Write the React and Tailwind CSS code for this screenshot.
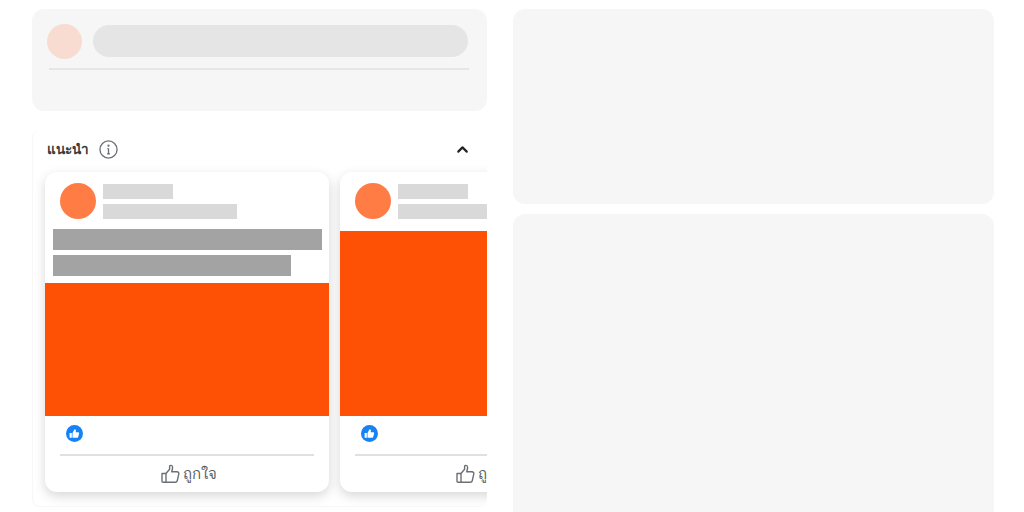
import { ChevronUp } from 'lucide-react';

function LikeBadge() {
  return (
    <svg width="17" height="17" viewBox="0 0 17 17">
      <circle cx="8.5" cy="8.5" r="8.5" fill="#1583f5" />
      <path d="M3.6 8h2.2v4.8H3.6zM6.5 8l2-3.8c1-.1 1.6.7 1.4 1.7l-.3 1.3h2.5c.8 0 1.2.6 1 1.3l-.9 3.4c-.1.5-.5.8-1 .8H6.5z" fill="#fff" />
    </svg>
  );
}

function ThumbOutline() {
  return (
    <svg width="19" height="20" viewBox="0 0 19 20" fill="none" stroke="#6b7075" strokeWidth="1.4" strokeLinejoin="round">
      <path d="M1 9.5h4v8.8H2a1 1 0 0 1-1-1z" />
      <path d="M5 9.5 8.6 5.2V2.4c0-1.4 2.8-1.6 3 .8.1 1.5-.6 3.2-.9 4.6h5.4c1.2 0 2 1 1.7 2.1l-1.5 6.6c-.2 1-1 1.8-2 1.8H5" />
    </svg>
  );
}

function PostCard({ hasTitle }) {
  return (
    <div className="flex h-[320px] w-[284px] shrink-0 flex-col overflow-hidden rounded-xl bg-white shadow-[0_4px_12px_rgba(0,0,0,0.16)]">
      <div className="flex gap-[7px] pl-[15px] pt-[11px]">
        <div className="h-9 w-9 rounded-full bg-[#ff7c45]" />
        <div className="flex flex-col gap-[5px] pt-px">
          <div className="h-[15px] w-[70px] bg-[#d9d9d9]" />
          <div className="h-[15px] w-[134px] bg-[#d9d9d9]" />
        </div>
      </div>
      {hasTitle ? (
        <div className="flex flex-col gap-[5px] px-2 pt-[10px]">
          <div className="h-[21px] w-[269px] bg-[#a3a3a3]" />
          <div className="h-[21px] w-[238px] bg-[#a3a3a3]" />
        </div>
      ) : null}
      <div className={hasTitle ? 'mt-[7px] h-[133px] bg-[#ff5106]' : 'mt-3 h-[185px] bg-[#ff5106]'} />
      <div className="pl-[21px] pt-[9px]">
        <LikeBadge />
      </div>
      <div className="mx-[15px] mt-[12px] h-[2px] bg-[#e0e0e0]" />
      <div className="flex flex-1 items-center justify-center gap-[3px] pb-px pl-[4px] font-['Noto_Sans',sans-serif] text-[15px] text-[#5c6166]">
        <ThumbOutline />
        <span>ถูกใจ</span>
      </div>
    </div>
  );
}

export default function App() {
  return (
    <div className="flex h-[512px] gap-[26px] overflow-hidden bg-white pl-8 pt-[9px]">
      <div className="flex w-[455px] shrink-0 flex-col">
        <div className="h-[102px] shrink-0 rounded-xl bg-[#f6f6f6] pl-[15px] pr-[18px] pt-[15px]">
          <div className="flex items-start gap-[11px]">
            <div className="h-[35px] w-[35px] rounded-full bg-[#f8dcd2]" />
            <div className="mt-px h-8 w-[375px] rounded-full bg-[#e5e5e5]" />
          </div>
          <div className="ml-[2px] mt-[9px] h-[2px] bg-[#e6e6e6]" />
        </div>
        <div className="mt-[19px] h-[377px] shrink-0 overflow-hidden rounded-lg border-b border-l border-[#f7f7f7]">
          <div className="flex h-[42px] items-center pb-[3px] pl-[14px] pr-[16px]">
            <span className="font-['Noto_Sans',sans-serif] text-[13.5px] font-semibold text-[#3b3b3b]">แนะนำ</span>
            <svg className="ml-[10px]" width="19" height="19" viewBox="0 0 20 20" fill="none" stroke="#6b7075" strokeWidth="1.4">
              <circle cx="10" cy="10" r="9" />
              <path d="M10 9v5.5M8.6 14.5h2.8M8.8 9H10" />
              <circle cx="10" cy="6" r=".5" fill="#6b7075" />
            </svg>
            <ChevronUp className="ml-auto text-[#222222]" size={17} strokeWidth={3} />
          </div>
          <div className="flex gap-[11px] pl-[12px]">
            <PostCard hasTitle />
            <PostCard />
          </div>
        </div>
      </div>
      <div className="flex w-[481px] shrink-0 flex-col gap-[10px]">
        <div className="h-[195px] shrink-0 rounded-xl bg-[#f6f6f6]" />
        <div className="h-[320px] shrink-0 rounded-xl bg-[#f6f6f6]" />
      </div>
    </div>
  );
}
